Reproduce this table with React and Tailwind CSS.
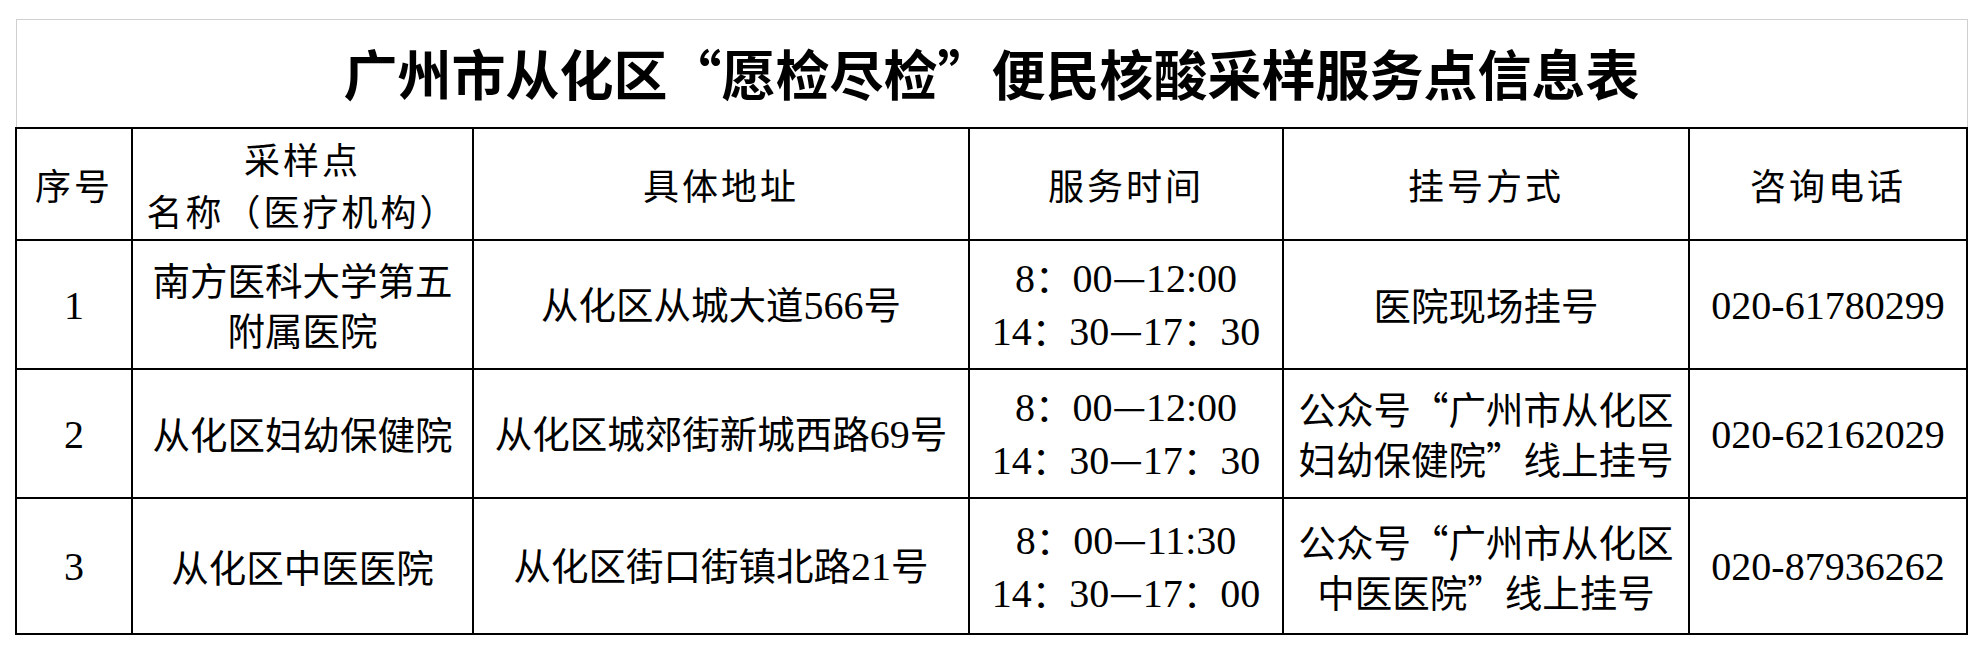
import React from "react";

const rows = [
  {
    no: "1",
    name: ["南方医科大学第五", "附属医院"],
    addr: ["从化区从城大道566号"],
    time: ["8：00—12:00", "14：30—17：30"],
    reg: ["医院现场挂号"],
    tel: "020-61780299",
    h: "h-[129px]",
  },
  {
    no: "2",
    name: ["从化区妇幼保健院"],
    addr: ["从化区城郊街新城西路69号"],
    time: ["8：00—12:00", "14：30—17：30"],
    reg: ["公众号“广州市从化区", "妇幼保健院”线上挂号"],
    tel: "020-62162029",
    h: "h-[129px]",
  },
  {
    no: "3",
    name: ["从化区中医医院"],
    addr: ["从化区街口街镇北路21号"],
    time: ["8：00—11:30", "14：30—17：00"],
    reg: ["公众号“广州市从化区", "中医医院”线上挂号"],
    tel: "020-87936262",
    h: "h-[136px]",
  },
];

// digits and ascii punctuation get the narrow serif face, the rest stays CJK
function Mixed({ text }) {
  const parts = text.split(/([0-9:\-]+)/);
  return parts.map((p, i) =>
    /^[0-9:\-]+$/.test(p) ? (
      <span key={i} className="font-['Liberation_Serif',serif] text-[40px]">
        {p}
      </span>
    ) : (
      <span key={i}>{p}</span>
    )
  );
}

function Cell({ lines }) {
  return (
    <td className="border-2 border-black text-center align-middle">
      {lines.map((l, i) => (
        <div key={i} className="leading-[50px] whitespace-nowrap">
          <Mixed text={l} />
        </div>
      ))}
    </td>
  );
}

function Head({ lines }) {
  return (
    <td className="border-2 border-black text-center align-middle">
      {lines.map((l, i) => (
        <div key={i} className="leading-[52px] whitespace-nowrap">
          {l}
        </div>
      ))}
    </td>
  );
}

export default function App() {
  return (
    <div className="w-[1982px] h-[650px] bg-white pt-[19px] pl-[15px] text-black font-['Noto_Sans_CJK_SC',sans-serif]">
      <table className="border-collapse table-fixed w-[1951px]">
        <colgroup>
          <col className="w-[116px]" />
          <col className="w-[341px]" />
          <col className="w-[496px]" />
          <col className="w-[314px]" />
          <col className="w-[406px]" />
          <col className="w-[278px]" />
        </colgroup>
        <tbody>
          <tr className="h-[108px]">
            <td
              colSpan={6}
              className="border border-[#d0d0d0] border-b-2 border-b-black text-center align-middle text-[54px] font-bold leading-none"
            >
              广州市从化区“愿检尽检”便民核酸采样服务点信息表
            </td>
          </tr>
          <tr className="h-[112px] text-[36px] tracking-[3px]">
            <Head lines={["序号"]} />
            <Head lines={["采样点", "名称（医疗机构）"]} />
            <Head lines={["具体地址"]} />
            <Head lines={["服务时间"]} />
            <Head lines={["挂号方式"]} />
            <Head lines={["咨询电话"]} />
          </tr>
          {rows.map((r) => (
            <tr key={r.no} className={`${r.h} text-[37.5px]`}>
              <Cell lines={[r.no]} />
              <Cell lines={r.name} />
              <Cell lines={r.addr} />
              <Cell lines={r.time} />
              <Cell lines={r.reg} />
              <Cell lines={[r.tel]} />
            </tr>
          ))}
        </tbody>
      </table>
    </div>
  );
}
